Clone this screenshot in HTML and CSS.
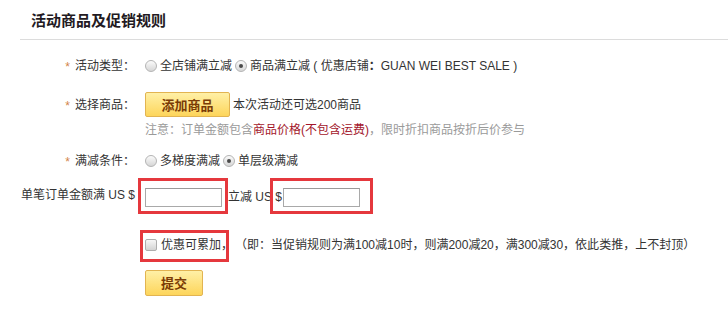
FILE: index.html
```html
<!DOCTYPE html>
<html lang="zh-CN">
<head>
<meta charset="utf-8">
<title>活动商品及促销规则</title>
<link rel="stylesheet" href="styles.css">
</head>
<body>
<div class="page">
  <div class="head">
    <h2 class="title">活动商品及促销规则</h2>
  </div>
  <div class="form">
    <div class="row r1">
      <div class="label"><span class="star">*</span>活动类型：</div>
      <div class="field">
        <span class="radio"></span><span class="opt">全店铺满立减</span>
        <span class="radio on"></span><span class="opt">商品满立减 ( 优惠店铺<b class="colon">：</b>GUAN WEI BEST SALE )</span>
      </div>
    </div>
    <div class="row r2">
      <div class="label"><span class="star">*</span>选择商品：</div>
      <div class="field">
        <span class="btn btn-add">添加商品</span><span class="after-btn">本次活动还可选200商品</span>
      </div>
    </div>
    <div class="note">注意：订单金额包含<span class="hl">商品价格(不包含运费)</span>，限时折扣商品按折后价参与</div>
    <div class="row r3">
      <div class="label"><span class="star">*</span>满减条件：</div>
      <div class="field">
        <span class="radio"></span><span class="opt">多梯度满减</span>
        <span class="radio on"></span><span class="opt">单层级满减</span>
      </div>
    </div>
    <div class="row r4">
      <span class="amt-label">单笔订单金额满 US $</span>
      <span class="input in1"></span>
      <span class="mid">立减 US $</span>
      <span class="input in2"></span>
    </div>
    <div class="row r5">
      <span class="check"></span><span class="cum">优惠可累加，</span><span class="expl">（即：当促销规则为满100减10时，则满200减20，满300减30，依此类推，上不封顶）</span>
    </div>
    <div class="row r6">
      <span class="btn btn-submit">提交</span>
    </div>
  </div>
  <div class="mark m1"></div>
  <div class="mark m2"></div>
  <div class="mark m3"></div>
</div>
</body>
</html>
```

FILE: styles.css
```css
html, body {
  margin: 0;
  padding: 0;
  background: #fff;
}
body {
  font-family: "Liberation Sans", "Noto Sans CJK SC", sans-serif;
  font-size: 12px;
  line-height: 16px;
  color: #333;
}
.page {
  position: relative;
  width: 728px;
  height: 314px;
  overflow: hidden;
}
.head {
  margin-left: 20px;
  height: 39px;
  border-bottom: 1px solid #dcdcdc;
}
.title {
  margin: 0;
  padding: 11px 0 0 11px;
  font-size: 15px;
  line-height: 17px;
  font-weight: bold;
  color: #231a22;
  font-family: "Noto Sans CJK SC", sans-serif;
}
.row {
  display: flex;
  align-items: center;
  height: 24px;
}
.label {
  width: 135px;
  flex: none;
  text-align: right;
  color: #333;
  white-space: nowrap;
}
.star {
  color: #d2844a;
  margin-right: 5px;
  position: relative;
  top: 1px;
}
.field {
  margin-left: 10px;
  display: flex;
  align-items: center;
  white-space: nowrap;
}
.radio {
  display: inline-block;
  width: 10px;
  height: 10px;
  border: 1px solid #b4b4b4;
  border-radius: 50%;
  background: linear-gradient(#fbfbfb, #d6d6d6);
  margin-right: 3px;
  position: relative;
  flex: none;
}
.radio.on::after {
  content: "";
  position: absolute;
  left: 3px;
  top: 3px;
  width: 4px;
  height: 4px;
  border-radius: 50%;
  background: #4a4a4a;
}
.opt {
  margin-right: 3px;
}
.colon {
  font-weight: bold;
}
.r1 { margin-top: 14px; }
.r2 { margin-top: 14px; height: 25px; }
.btn {
  display: inline-flex;
  align-items: center;
  justify-content: center;
  box-sizing: border-box;
  border: 1px solid #e2b451;
  border-radius: 2px;
  background: linear-gradient(#fff0a6, #fdd55b);
  color: #7a3b06;
  font-family: "Noto Sans CJK SC", sans-serif;
  font-weight: bold;
  font-size: 13px;
}
.btn-add {
  width: 85px;
  height: 25px;
}
.after-btn {
  margin-left: 3px;
}
.note {
  margin-top: 5px;
  padding-left: 145px;
  height: 16px;
  color: #9a9a9a;
  white-space: nowrap;
}
.hl {
  color: #a3162b;
}
.r3 { margin-top: 11px; }
.r4 {
  margin-top: 12px;
  padding-left: 21px;
}
.amt-label {
  position: relative;
  top: -2px;
}
.input {
  display: inline-block;
  box-sizing: border-box;
  width: 77px;
  height: 19px;
  border: 1px solid #a9a9a9;
  border-top-color: #9a9a9a;
  background: #fff;
  flex: none;
}
.in1 { margin-left: 10px; }
.mid { margin-left: 6px; margin-right: 1px; }
.r5 {
  margin-top: 24px;
  padding-left: 145px;
  white-space: nowrap;
}
.check {
  display: inline-block;
  box-sizing: border-box;
  width: 12px;
  height: 12px;
  border: 1px solid #adadad;
  border-radius: 2px;
  background: linear-gradient(#f6f6f6, #d3d3d3);
  margin-right: 4px;
  flex: none;
}
.expl {
  margin-left: 2px;
}
.r6 {
  margin-top: 13px;
  padding-left: 145px;
  height: 26px;
}
.btn-submit {
  width: 58px;
  height: 26px;
}
.mark {
  position: absolute;
  box-sizing: border-box;
  border: 3px solid #e5383d;
}
.m1 { left: 138px; top: 178px; width: 90px; height: 36px; }
.m2 { left: 270px; top: 178px; width: 103px; height: 36px; }
.m3 { left: 140px; top: 230px; width: 89px; height: 32px; }
```
